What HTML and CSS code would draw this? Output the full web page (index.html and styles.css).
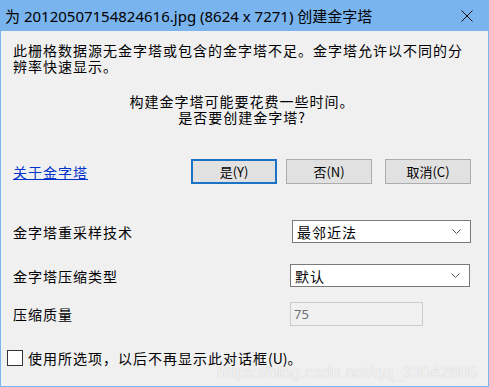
FILE: index.html
```html
<!DOCTYPE html>
<html lang="zh-CN">
<head>
    <meta charset="UTF-8">
    <title>创建金字塔</title>
    <link rel="stylesheet" href="styles.css">
</head>
<body>
    <div class="window">
        <div class="titlebar">
            <span class="title">为 20120507154824616.jpg (8624 x 7271) 创建金字塔</span>
            <svg class="close" width="12" height="12" viewBox="0 0 12 12">
                <path d="M0.5 0.5 L11.5 11.5 M11.5 0.5 L0.5 11.5" stroke="#111" stroke-width="1" fill="none"/>
            </svg>
        </div>

        <div class="content">
            <p class="msg">此栅格数据源无金字塔或包含的金字塔不足。金字塔允许以不同的分<br>辨率快速显示。</p>
            <p class="question">构建金字塔可能要花费一些时间。<br>是否要创建金字塔?</p>

            <div class="actions">
                <a class="help" href="#">关于金字塔</a>
                <div class="buttons">
                    <button class="btn btn-default">是(Y)</button>
                    <button class="btn btn-no">否(N)</button>
                    <button class="btn btn-cancel">取消(C)</button>
                </div>
            </div>

            <!-- 选项 -->
            <div class="field field-resample">
                <span class="label">金字塔重采样技术</span>
                <div class="select">最邻近法
                    <svg class="arrow" width="9" height="5" viewBox="0 0 9 5"><path d="M0.5 0.5 L4.5 4.5 L8.5 0.5" stroke="#555" fill="none"/></svg>
                </div>
            </div>
            <div class="field field-compress">
                <span class="label">金字塔压缩类型</span>
                <div class="select">默认
                    <svg class="arrow" width="9" height="5" viewBox="0 0 9 5"><path d="M0.5 0.5 L4.5 4.5 L8.5 0.5" stroke="#555" fill="none"/></svg>
                </div>
            </div>
            <div class="field field-quality">
                <span class="label">压缩质量</span>
                <div class="input-disabled">75</div>
            </div>

            <div class="check">
                <span class="box"></span>
                <span>使用所选项，以后不再显示此对话框<span class="latin">(U)</span>。</span>
            </div>

            <span class="watermark">https://blog.csdn.net/qq_33042605</span>
        </div>
    </div>
</body>
</html>
```

FILE: styles.css
```css
:root {
    --accent: #7ab4ee;
    --dialog-bg: #f0f0f0;
}

body {
    margin: 0;
    background: var(--dialog-bg);
}

.window {
    width: 489px;
    height: 387px;
    display: flex;
    flex-direction: column;
}

/* Barra de título */
.titlebar {
    height: 31px;
    flex-shrink: 0;
    background: var(--accent);
    display: flex;
    align-items: center;
    justify-content: space-between;
    padding: 0 16px 0 5px;
}

.title {
    font-family: "Noto Sans", "Noto Sans CJK SC", sans-serif;
    font-size: 15px;
    color: #000;
    white-space: nowrap;
}

.close {
    display: block;
}

/* Conteúdo */
.content {
    position: relative;
    flex: 1;
    border: 1px solid var(--accent);
    border-top: 0;
    padding: 11px 17px 0 12px;
    font-family: "Noto Sans CJK SC", sans-serif;
    font-size: 14px;
    letter-spacing: 1px;
    line-height: 16px;
    color: #000;
}

.msg {
    margin: 0;
}

.question {
    margin: 19px 0 0;
    text-align: center;
}

.actions {
    margin-top: 34px;
    display: flex;
    align-items: center;
    height: 25px;
}

.help {
    color: #0033cc;
    text-decoration: underline;
}

.buttons {
    margin-left: auto;
    display: flex;
}

.btn {
    width: 86px;
    height: 25px;
    box-sizing: border-box;
    background: #e1e1e1;
    border: 1px solid #adadad;
    padding: 0;
    font-family: "Noto Sans CJK SC", sans-serif;
    font-size: 13px;
    color: #000;
}

.btn-default {
    border: 2px solid #1a73c4;
}

.btn-no { margin-left: 9px; }
.btn-cancel { margin-left: 13px; }

/* Campos */
.field {
    display: flex;
    align-items: center;
}

.label {
    width: 277px;
    flex-shrink: 0;
}

.field-resample { margin-top: 36px; }
.field-resample .select { margin-left: 2px; }
.field-compress { margin-top: 21px; }
.field-quality { margin-top: 15px; }

.select {
    width: 180px;
    height: 23px;
    box-sizing: border-box;
    border: 1px solid #7a7a7a;
    background: #fff;
    padding: 0 9px 0 4px;
    display: flex;
    align-items: center;
    justify-content: space-between;
}

.input-disabled {
    width: 133px;
    height: 24px;
    box-sizing: border-box;
    border: 1px solid #cccccc;
    background: var(--dialog-bg);
    padding-left: 3px;
    display: flex;
    align-items: center;
    font-family: "Noto Sans", sans-serif;
    font-size: 13px;
    letter-spacing: 0;
    color: #6d6d6d;
}

.check {
    margin: 24px 0 0 -6px;
    display: flex;
    align-items: center;
    gap: 5px;
}

.box {
    width: 14px;
    height: 14px;
    border: 1px solid #333;
    background: #fff;
    flex-shrink: 0;
}

.latin {
    letter-spacing: 0;
}

/* Marca d'água */
.watermark {
    position: absolute;
    right: 10px;
    bottom: 4px;
    font-family: "Liberation Sans", sans-serif;
    font-size: 17px;
    line-height: 18px;
    letter-spacing: 0;
    color: rgba(255, 255, 255, 0.8);
    text-shadow: 0 0 1px rgba(0, 0, 0, 0.22);
}
```
